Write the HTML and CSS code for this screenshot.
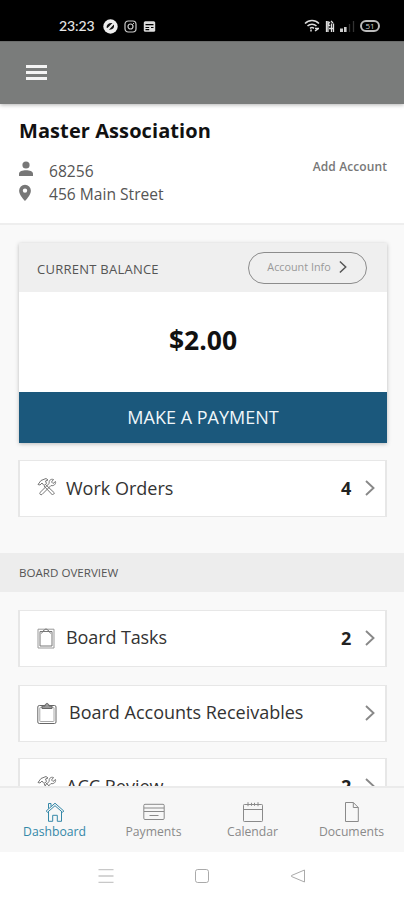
FILE: index.html
```html
<!DOCTYPE html>
<html lang="en">
<head>
<meta charset="utf-8">
<meta name="viewport" content="width=device-width, initial-scale=1">
<title>Dashboard</title>
<link rel="stylesheet" href="styles.css">
</head>
<body>
<svg class="defs" width="0" height="0" aria-hidden="true">
  <symbol id="tools" viewBox="0 0 20 20">
    <g fill="none" stroke="currentColor" stroke-width="1">
      <path d="M1 7.5 4 3.5 9 1.5 11 3 8.500 4 9.500 6.500 7 8.500 5 6 3 8Z"/>
      <path d="m8.500 7.500 9 8.500-2 2-8.500-9"/>
      <path d="M18.500 4.500 16 6.500 14.500 5 16.500 2.500C13.500 1.500 11.500 4 12.300 6.300L3 15.500c-1 1.200.8 3 2 2L14 8.500c2.500.8 5.200-1.200 4.500-4Z"/>
    </g>
  </symbol>
  <symbol id="chevron" viewBox="0 0 12 18">
    <path d="m2 2 7.500 7L2 16" fill="none" stroke="currentColor" stroke-width="1.900"/>
  </symbol>
</svg>
<div class="phone">
  <div class="status">
    <div class="status-left">
      <span class="clock">23:23</span>
      <svg width="15" height="15" viewBox="0 0 15 15"><circle cx="7.500" cy="7.500" r="7.200" fill="#eee"/><path d="M3.500 8.500c0-3 2.500-5 6-4.500L4.500 9ZM10.800 5.500c1 3-1 5.500-4.800 5.200Z" fill="#111"/></svg>
      <svg width="13" height="13" viewBox="0 0 13 13" fill="none" stroke="#ccc" stroke-width="1.200"><rect x="1" y="1" width="11" height="11" rx="3.200"/><circle cx="6.500" cy="6.500" r="2.500"/><path d="M9 3.500h1"/></svg>
      <svg width="13" height="13" viewBox="0 0 13 13"><rect x=".8" y="1.200" width="11.400" height="10.600" rx="1.500" fill="#ddd"/><path d="M2.500 4.600h8M2.500 7.500h3.700M8 7.500h2.500M2.500 9.700h3.700" stroke="#000" stroke-width="1.200"/></svg>
    </div>
    <div class="status-right">
      <svg width="16" height="14" viewBox="0 0 16 14" fill="none" stroke="#ddd" stroke-width="1.500"><path d="M1 4.500c4-4 10-4 14 0M3.500 7c2.500-2.400 6.500-2.400 9 0M6 9.300c1.300-1 2.700-1 4 0M7 12.500v-2M11 9.500h4M11 12l3-2"/></svg>
      <svg width="10" height="13" viewBox="0 0 10 13" fill="none" stroke="#ddd"><path d="M1.500 1v11M3 1v11M5 2l-2 2 2 2M6.500 3.500V12M8.500 3.500V12M6 1l2 2M4 8.500h5" stroke-width="1.300"/></svg>
      <svg class="signal" width="16" height="13" viewBox="0 0 16 13"><path d="M1 8.500h3V12H1zM5 7h2.600v5H5z" fill="#ccc"/><path d="M10.500 4v8M14.500 1v11" stroke="#333" stroke-width="1.300"/></svg>
      <span class="battery">51</span>
    </div>
  </div>
  <header class="topbar"><span class="burger"><i></i><i></i><i></i></span></header>
  <section class="account">
    <div>
      <h1>Master Association</h1>
      <p class="detail"><svg width="16" height="16" viewBox="0 0 16 16" fill="#777"><circle cx="8" cy="4" r="3.600"/><path d="M1 15v-2.300c0-4.500 14-4.500 14 0V15z"/></svg><span class="number">68256</span></p>
      <p class="detail"><svg width="16" height="18" viewBox="0 0 16 18"><path fill="#777" fill-rule="evenodd" d="M7 .8a5.900 5.900 0 0 1 5.900 5.900C12.900 11 7 17 7 17S1.100 11 1.100 6.700A5.900 5.900 0 0 1 7 .8Zm0 3.600a2.200 2.200 0 1 0 0 4.400 2.200 2.200 0 0 0 0-4.400Z"/></svg><span class="street">456 Main Street</span></p>
    </div>
    <span class="add">Add Account</span>
  </section>
  <main>
    <section class="balance">
      <div class="balance-head"><span class="balance-title">CURRENT BALANCE</span><span class="info"><span>Account Info</span><svg width="10" height="14"><use href="#chevron"/></svg></span></div>
      <div class="amount"><span>$2.00</span></div>
      <div class="pay"><span>MAKE A PAYMENT</span></div>
    </section>
    <div class="row"><svg class="icon" width="20" height="20"><use href="#tools"/></svg><span class="label orders">Work Orders</span><b>4</b><svg class="chev" width="12" height="18"><use href="#chevron"/></svg></div>
    <h2>BOARD OVERVIEW</h2>
    <div class="row"><svg class="icon clip" width="20" height="23" viewBox="0 0 20 23" fill="none" stroke="#777"><path d="M1 2.200h16v18.800H1z" stroke="#999"/><path d="M3 4.500h12v14.500H3z"/><path d="M4.500 6.500 6 4l3-2.200L12 4l1.500 2.500"/></svg><span class="label tasks">Board Tasks</span><b>2</b><svg class="chev" width="12" height="18"><use href="#chevron"/></svg></div>
    <div class="row last"><svg class="icon wide" width="20" height="23" viewBox="0 0 20 23" fill="none" stroke="#666"><rect x=".8" y="3.500" width="18.200" height="18" rx="1.500"/><rect x="2.800" y="5.500" width="14.200" height="14" rx=".5" stroke="#aaa"/><path d="M5 6.500V4h3c0-3.500 4-3.500 4 0h3v2.500Z" fill="#999"/></svg><span class="label receivables">Board Accounts Receivables</span><svg class="chev" width="12" height="18"><use href="#chevron"/></svg></div>
    <div class="row"><svg class="icon" width="20" height="20"><use href="#tools"/></svg><span class="label review">ACC Review</span><b>2</b><svg class="chev" width="12" height="18"><use href="#chevron"/></svg></div>
  </main>
  <nav class="tabs">
    <a class="active"><svg width="22" height="22" viewBox="0 0 22 22" fill="none" stroke="currentColor"><path d="M4.500 10.500v9.800h4.200v-6h4.600v6h4.200v-9.800M2.200 10 11 2.200l8.800 7.800-1.300 1.300L11 4.700l-7.500 6.600ZM4.500 7.500v-5h2.500v3"/></svg><span>Dashboard</span></a>
    <a><svg width="22" height="22" viewBox="0 0 22 22" fill="none" stroke="currentColor"><rect x=".8" y="3.300" width="20.400" height="15.200" rx="1.200"/><path d="M1 7h20M1 10.500h20M6.500 14.500h9" /></svg><span>Payments</span></a>
    <a><svg width="22" height="22" viewBox="0 0 22 22" fill="none" stroke="currentColor"><rect x="1.500" y="3.500" width="19" height="17" rx=".8"/><path d="M1.500 8.500h19M6 1.200v4M16 1.200v4M9.500 1.800v3M12.500 1.800v3"/></svg><span>Calendar</span></a>
    <a><svg width="22" height="22" viewBox="0 0 22 22" fill="none" stroke="currentColor"><path d="M4.500 1.500h7.800l5 5v14H4.500ZM12.300 1.500v5h5"/></svg><span>Documents</span></a>
  </nav>
  <div class="system">
    <svg width="16" height="16" viewBox="0 0 16 16" stroke="#c8c8c8" stroke-width="1.300"><path d="M.5 1.700h15M.5 8h15M.5 14.300h15"/></svg>
    <svg width="16" height="16" viewBox="0 0 16 16" fill="none" stroke="#aaa"><rect x="1.500" y="1.500" width="13" height="13" rx="2.200"/></svg>
    <svg width="16" height="16" viewBox="0 0 16 16" fill="none" stroke="#aaa" stroke-linejoin="round"><path d="M14.500 2v12L1.500 8.500v-1Z"/></svg>
  </div>
</div>
</body>
</html>
```
FILE: styles.css
```css
* { box-sizing: border-box; }
body { margin: 0; font-family: "Open Sans", "Noto Sans", sans-serif; color: #333; background: #fff; }
.defs { display: block; height: 0; }
svg { display: block; flex: none; }
h1, h2, p { margin: 0; }
.phone { width: 404px; height: 900px; display: flex; flex-direction: column; overflow: hidden; }

.status { flex: none; height: 41px; background: #000; color: #e6e6e6; display: flex; justify-content: space-between; padding: 11px 24px 0 59px; }
.status-left, .status-right { display: flex; align-items: center; height: 30px; }
.clock { width: 44px; font: 500 14px/30px Lato, sans-serif; letter-spacing: -.1px; }
.status-left svg { margin-right: 6px; }
.status-right svg { margin-right: 4px; }
.status-right svg:first-child { margin-left: -5px; margin-right: 5px; }
.status-right .signal { margin-right: 5px; }
.battery { width: 20px; height: 12px; border: 2px solid #bbb; border-radius: 6px; font-size: 8px; line-height: 8px; text-align: center; color: #ccc; }

.topbar { flex: none; height: 63px; background: #7a7c7b; padding: 23px 26px; border-top: 1px solid #6b6d6c; box-shadow: 0 1px 4px rgba(0,0,0,.3); z-index: 1; }
.burger { display: flex; flex-direction: column; gap: 3px; width: 21px; }
.burger i { height: 3px; background: #f4f4f4; }

.account { flex: none; height: 121px; background: #fff; border-bottom: 2px solid #eee; padding: 13px 17px 0 19px; display: flex; justify-content: space-between; }
h1 { font-size: 20px; line-height: 28px; letter-spacing: .08px; font-weight: 700; color: #111; margin-bottom: 14px; white-space: nowrap; }
.detail { display: flex; align-items: center; height: 23.500px; font-size: 15.600px; color: #555; }
.detail svg { width: 16px; margin: -3px 15px 0 -1px; }
.add { margin-top: 40px; font-size: 12px; letter-spacing: .1px; line-height: 20px; font-weight: 600; color: #777; white-space: nowrap; }

main { flex: 1; min-height: 0; overflow: hidden; background: #f9f9f9; padding-top: 18px; }
.balance { margin: 0 17px 17px 19px; height: 200px; background: #fff; box-shadow: 0 1px 4px rgba(0,0,0,.25); }
.balance-head { height: 49px; background: #efefef; display: flex; align-items: center; justify-content: space-between; padding: 0 20px 0 18px; }
.balance-title { font-size: 13px; letter-spacing: .25px; color: #555; padding-top: 3px; }
.info { width: 119px; height: 32px; border: 1px solid #8c8c8c; border-radius: 16px; display: flex; align-items: center; justify-content: center; gap: 7px; font-size: 10.800px; color: #999; padding-bottom: 2px; }
.info svg { color: #555; }
.amount { height: 100px; display: flex; align-items: center; justify-content: center; font-size: 26.500px; font-weight: 700; color: #111; padding-bottom: 4px; }
.pay { height: 51px; background: #1b587c; color: #eff6fa; display: flex; align-items: center; justify-content: center; font-size: 18px; padding-bottom: 2px; }

.row { height: 57px; margin: 0 17px 18px 18px; border: 1px solid #e7e7e7; border-width: 1px 2px; background: #fff; display: flex; align-items: center; padding: 0 9px 0 17px; }
.row.last { margin-bottom: 16px; }
.icon { width: 20px; margin-right: 9px; margin-top: -4px; color: #777; }
.clip { margin-top: 0; }
.wide { margin-right: 12px; margin-top: -1px; }
.label { font-size: 18px; font-weight: 400; color: #333; white-space: nowrap; margin-right: auto; padding-bottom: 1px; }
.tasks, .receivables { padding-bottom: 3px; }
.tasks { letter-spacing: -.1px; }
.row b { width: 12px; font-size: 18px; color: #222; margin-right: 11px; padding-bottom: 1px; }
.chev { color: #888; margin-top: -1px; }
h2 { height: 39px; margin: 36px 0 18px; padding-left: 19px; background: #ededed; font-size: 11.600px; line-height: 40px; font-weight: 400; color: #555; }

.tabs { flex: none; height: 66px; background: #f7f7f7; border-top: 2px solid #ebebeb; display: flex; padding: 0 3px 0 5px; }
.tabs a { flex: 1; display: flex; flex-direction: column; align-items: center; padding-top: 13px; color: #8a8a8a; font-size: 12.200px; line-height: 18px; }
.tabs .active { color: #3488a8; }
.system { flex: none; height: 48px; background: #fff; display: flex; gap: 80px; justify-content: center; align-items: center; }
```
